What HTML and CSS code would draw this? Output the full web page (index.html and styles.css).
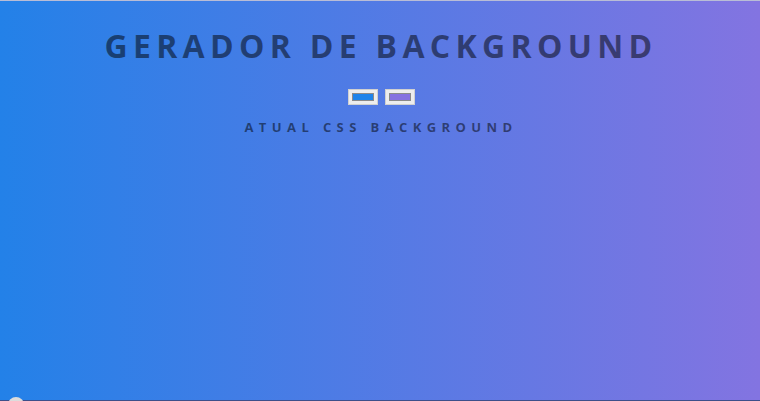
FILE: index.html
```html
<!DOCTYPE html>
<html lang="pt">
<head>
<meta charset="utf-8">
<title>Gerador de Background</title>
<link rel="stylesheet" href="styles.css">
</head>
<body>
  <main class="page">
    <h1 class="title">Gerador de Background</h1>
    <div class="pickers">
      <span class="picker"><span class="swatch swatch-a"></span></span>
      <span class="picker"><span class="swatch swatch-b"></span></span>
    </div>
    <h3 class="subtitle">Atual CSS Background</h3>
  </main>
  <div class="edge-bottom"><span class="dot"></span></div>
</body>
</html>
```
FILE: styles.css
```css
html, body {
  margin: 0;
  height: 100%;
}
body {
  background: linear-gradient(to right, #2381e8, #8374e1);
  font-family: "Open Sans", "Liberation Sans", sans-serif;
  color: rgba(0, 0, 0, 0.5);
  text-align: center;
  border-top: 1px solid #b9bdd6;
  box-sizing: border-box;
  position: relative;
  overflow: hidden;
}
.page {
  padding-top: 23px;
  padding-left: 2px;
}
.title {
  margin: 0;
  font-size: 32px;
  font-weight: 700;
  letter-spacing: 5.3px;
  text-transform: uppercase;
  line-height: 44px;
}
.pickers {
  display: flex;
  justify-content: center;
  gap: 7px;
  margin-top: 21px;
}
.picker {
  display: block;
  width: 30px;
  height: 16px;
  box-sizing: border-box;
  background: #ededed;
  border: 1px solid #d0d0d0;
  padding: 3px;
}
.swatch {
  display: block;
  height: 100%;
  border: 1px solid #8a8a8a;
  box-sizing: border-box;
}
.swatch-a { background: #1e83ea; }
.swatch-b { background: #8571e0; }
.subtitle {
  margin: 13px 0 0;
  font-size: 13px;
  font-weight: 700;
  letter-spacing: 5.4px;
  text-transform: uppercase;
  line-height: 18px;
}
.edge-bottom {
  position: absolute;
  left: 0;
  right: 0;
  bottom: 0;
  height: 1px;
  background: #3c4f8a;
}
.dot {
  position: absolute;
  left: 8px;
  top: -3px;
  width: 16px;
  height: 16px;
  border-radius: 50%;
  background: #dcdcdc;
}
```
